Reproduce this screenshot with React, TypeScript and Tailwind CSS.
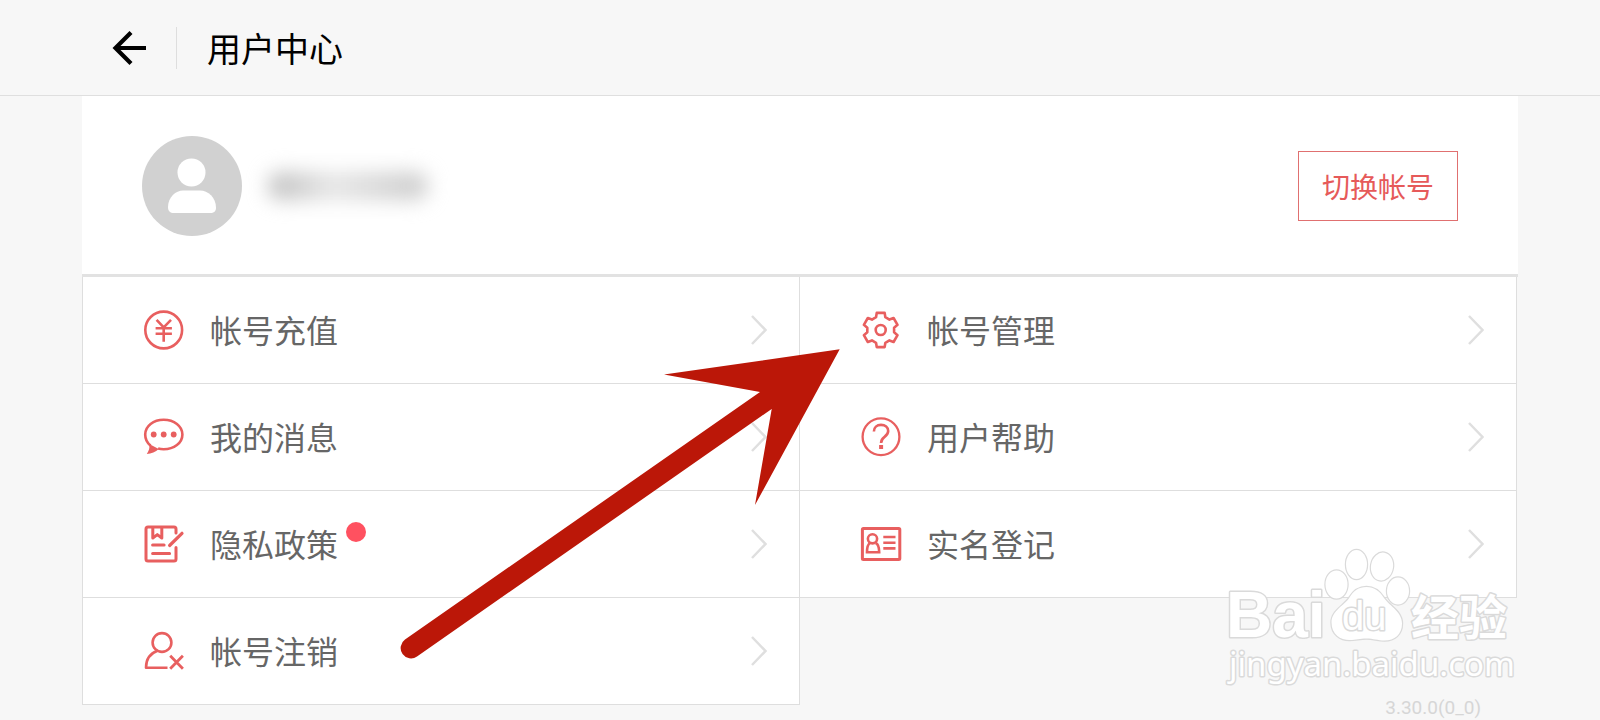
import type { ReactNode } from 'react'

const gearPath = () => {
  const pts: string[] = []
  for (let tooth = 0; tooth < 6; tooth++) {
    const base = tooth * 60 - 90
    const corners = [[13.6, -20], [17.6, -13], [17.6, 13], [13.6, 20]]
    corners.forEach(([r, deg]) => {
      const a = ((base + deg) * Math.PI) / 180
      pts.push(`${(19.7 + r * Math.cos(a)).toFixed(2)} ${(20 + r * Math.sin(a)).toFixed(2)}`)
    })
  }
  return `M${pts.join('L')}Z`
}

function Icon({ children }: { children: ReactNode }) {
  return (
    <svg
      viewBox="0 0 40 40"
      className="size-10 shrink-0 overflow-visible"
      fill="none"
      stroke="#e85f5f"
      strokeWidth={2.6}
      aria-hidden="true"
    >
      {children}
    </svg>
  )
}

const icons = {
  recharge: (
    <Icon>
      <circle cx="19.7" cy="20" r="18.4" />
      <path d="M12.600 9.800l7.100 7.600 7.300-7.600M11.600 18.200h16.300M11.600 23.800h16.300M19.700 17v14.800" />
    </Icon>
  ),
  message: (
    <Icon>
      <path d="M6.6 28.6C3 25.8 1.2 21.8 1.2 17.5 1.2 9 9.4 2.7 19.7 2.7S38.4 9 38.4 17.5 30 32.3 19.7 32.3c-2 0-3.8-.2-5.6-.7" />
      <path d="M5.2 27c.8 3.700-.2 6.800-2.400 9.900 4.500-.3 8.800-1.600 12-4.900z" fill="#e85f5f" stroke="none" />
      <g fill="#e85f5f" stroke="none">
        <circle cx="9.7" cy="17.5" r="2.900" />
        <circle cx="19.7" cy="17.5" r="2.900" />
        <circle cx="29.7" cy="17.5" r="2.900" />
      </g>
    </Icon>
  ),
  privacy: (
    <Icon>
      <path
        d="M32 9V5a2 2 0 0 0-2-2H4a2 2 0 0 0-2 2v30a2 2 0 0 0 2 2h26a2 2 0 0 0 2-2V23.500M8.800 3v11l4.500-3.400L17.800 14V3M8.600 21h11.500M8.600 29.500h17"
        strokeWidth="3"
        strokeLinecap="round"
        strokeLinejoin="round"
      />
      <path d="M25.600 21.500L38 9.300" strokeWidth="3.200" strokeLinecap="round" />
    </Icon>
  ),
  cancel: (
    <Icon>
      <circle cx="18" cy="11.5" r="9.400" />
      <path d="M13.500 19.800C6 22.500 2 28.500 2 36.700h21.500" strokeLinejoin="round" />
      <path d="M26.200 24.800l12.700 12.900M38.900 24.800L26.200 37.700" strokeWidth="2.800" />
    </Icon>
  ),
  manage: (
    <Icon>
      <path d={gearPath()} strokeLinejoin="round" />
      <circle cx="19.7" cy="20" r="5" />
    </Icon>
  ),
  help: (
    <Icon>
      <circle cx="20" cy="19.8" r="18.400" strokeWidth="2.300" />
      <path d="M12.9 14.5c0-4 3-6.600 7.100-6.600s7.200 2.500 7.200 6.200c0 3-1.700 4.400-3.900 6-2.300 1.700-3.200 3-3.200 5.800" />
      <path d="M18.100 28h4v4h-4z" fill="#e85f5f" stroke="none" />
    </Icon>
  ),
  identity: (
    <Icon>
      <rect x="1.4" y="4.4" width="37.400" height="31.200" rx="1" strokeWidth="3" />
      <circle cx="11.5" cy="14.800" r="4.600" />
      <path d="M9 19c-2 1.200-3 3.400-3 9.200h12.200c0-5.800-1.200-8-3.400-9.200M22.300 13h12.200M22.300 18.700h12.200M22.300 24.400h12.200" />
    </Icon>
  ),
}

type Item = { label: string; icon: ReactNode; dot?: boolean }

const leftItems: Item[] = [
  { label: '帐号充值', icon: icons.recharge },
  { label: '我的消息', icon: icons.message },
  { label: '隐私政策', icon: icons.privacy, dot: true },
  { label: '帐号注销', icon: icons.cancel },
]

const rightItems: Item[] = [
  { label: '帐号管理', icon: icons.manage },
  { label: '用户帮助', icon: icons.help },
  { label: '实名登记', icon: icons.identity },
]

function MenuRow({ label, icon, dot }: Item) {
  return (
    <li>
      <a href="#" className="flex h-[107px] items-center border-r border-b border-[#dedede] bg-white pr-8 pl-[61px]">
        {icon}
        <span className="ml-[26px] pb-0.5 text-[32px] leading-10 text-[#666]">{label}</span>
        {dot && <span className="mb-6 ml-2 size-5 rounded-full bg-[#ff5160]" />}
        <svg viewBox="0 0 16 30" className="ml-auto h-[30px] w-4 shrink-0" fill="none" stroke="#dfdfdf" strokeWidth="2.5" aria-hidden="true">
          <path d="M1 1l13.500 14L1 29" />
        </svg>
      </a>
    </li>
  )
}

// 指向「帐号管理」的箭头
function Pointer() {
  return (
    <svg viewBox="0 0 450 320" className="pointer-events-none absolute top-[245px] left-[318px] h-[320px] w-[450px]" fill="#bb1708" aria-hidden="true">
      <path d="M439.700 8.300L264 33.500 360 51 5 298.600A10 10 0 0 0 17 315.500L371.700 68 355 164Z" />
    </svg>
  )
}

function Watermark() {
  return (
    <svg
      viewBox="0 0 300 150"
      className="pointer-events-none absolute right-0 bottom-[19px] h-[150px] w-[300px] overflow-visible"
      fill="#fff"
      stroke="#dadada"
      strokeWidth="3"
      paintOrder="stroke"
      strokeLinejoin="round"
    >
      <text x="8" y="86" fontFamily="Liberation Sans, sans-serif" fontWeight="700" fontSize="64">Bai</text>
      <g strokeWidth="2.400">
        <ellipse cx="118.5" cy="33.500" rx="11" ry="14" />
        <ellipse cx="138.5" cy="13.500" rx="10.500" ry="14.500" />
        <ellipse cx="164" cy="15.500" rx="11" ry="14" transform="rotate(10 164 15.500)" />
        <ellipse cx="180" cy="40" rx="11" ry="13.500" />
        <path d="M148.500 36c-8 0-13 4-17 10.500-5 8-18 13-18 25 0 12 9 17.500 18 17.500 7 0 10-1.500 17-1.500s11 2 18 2c10 0 17.500-6 17.500-17 0-12-12-17-18-25.500C161.500 40 156.500 36 148.500 36z" />
      </g>
      <text x="124" y="79" fontFamily="Liberation Sans, sans-serif" fontSize="40">du</text>
      <text x="193" y="84" fontFamily="Noto Sans CJK SC, sans-serif" fontWeight="700" fontSize="48">经验</text>
      <text x="11" y="125" fontFamily="Noto Sans, sans-serif" fontSize="33">jingyan.baidu.com</text>
    </svg>
  )
}

export default function App() {
  return (
    <div className="min-h-screen bg-[#f7f7f7] font-['Noto_Sans_CJK_SC',sans-serif]">
      <header className="flex h-24 items-center border-b border-[#dfdfdf] px-28">
        <button aria-label="返回" className="cursor-pointer">
          <svg viewBox="0 0 34 34" className="size-[34px]" fill="none" stroke="#000" strokeWidth="4.200" aria-hidden="true">
            <path d="M19 1.500L3.500 17 19 32.500M3 17h31" />
          </svg>
        </button>
        <span className="ml-[30px] h-[42px] w-px bg-[#dedede]" />
        <h1 className="ml-[30px] text-[34px] leading-10 text-black">用户中心</h1>
      </header>

      <main className="relative mx-[82px]">
        <section className="flex items-center border-b-3 border-[#e2e2e2] bg-white px-[60px] pt-10 pb-[38px]">
          <svg viewBox="0 0 100 100" className="size-[100px] shrink-0" aria-hidden="true">
            <circle cx="50" cy="50" r="50" fill="#d1d1d1" />
            <circle cx="49.5" cy="36.5" r="14" fill="#fff" />
            <path d="M26 71c0-10 8-16.500 15-16.500h17c8 0 16 6.500 16 17.500 0 3-2 5-6 5H32c-4 0-6-2-6-6z" fill="#fff" />
          </svg>
          {/* 用户名打码 */}
          <span className="ml-[26px] h-7 w-40 rounded-full bg-linear-to-r from-[#bcbcbc] via-[#e6e6e6] via-40% to-[#cacaca] blur-[10px]" />
          <button className="ml-auto h-[70px] w-40 cursor-pointer border border-[#e07070] text-[28px] leading-10 text-[#e65a5a]">
            切换帐号
          </button>
        </section>

        <div className="mr-px grid grid-cols-2 items-start pl-px">
          <ul className="-ml-px border-l border-[#dedede]">
            {leftItems.map(item => <MenuRow key={item.label} {...item} />)}
          </ul>
          <div>
            <ul>
              {rightItems.map(item => <MenuRow key={item.label} {...item} />)}
            </ul>
            <footer className="pt-[98px] pr-9 text-right font-[Roboto,sans-serif] text-[19px] leading-6 text-[#d6d6d6]">
              3.30.0(0_0)
            </footer>
          </div>
        </div>

        <Pointer />
        <Watermark />
      </main>
    </div>
  )
}
